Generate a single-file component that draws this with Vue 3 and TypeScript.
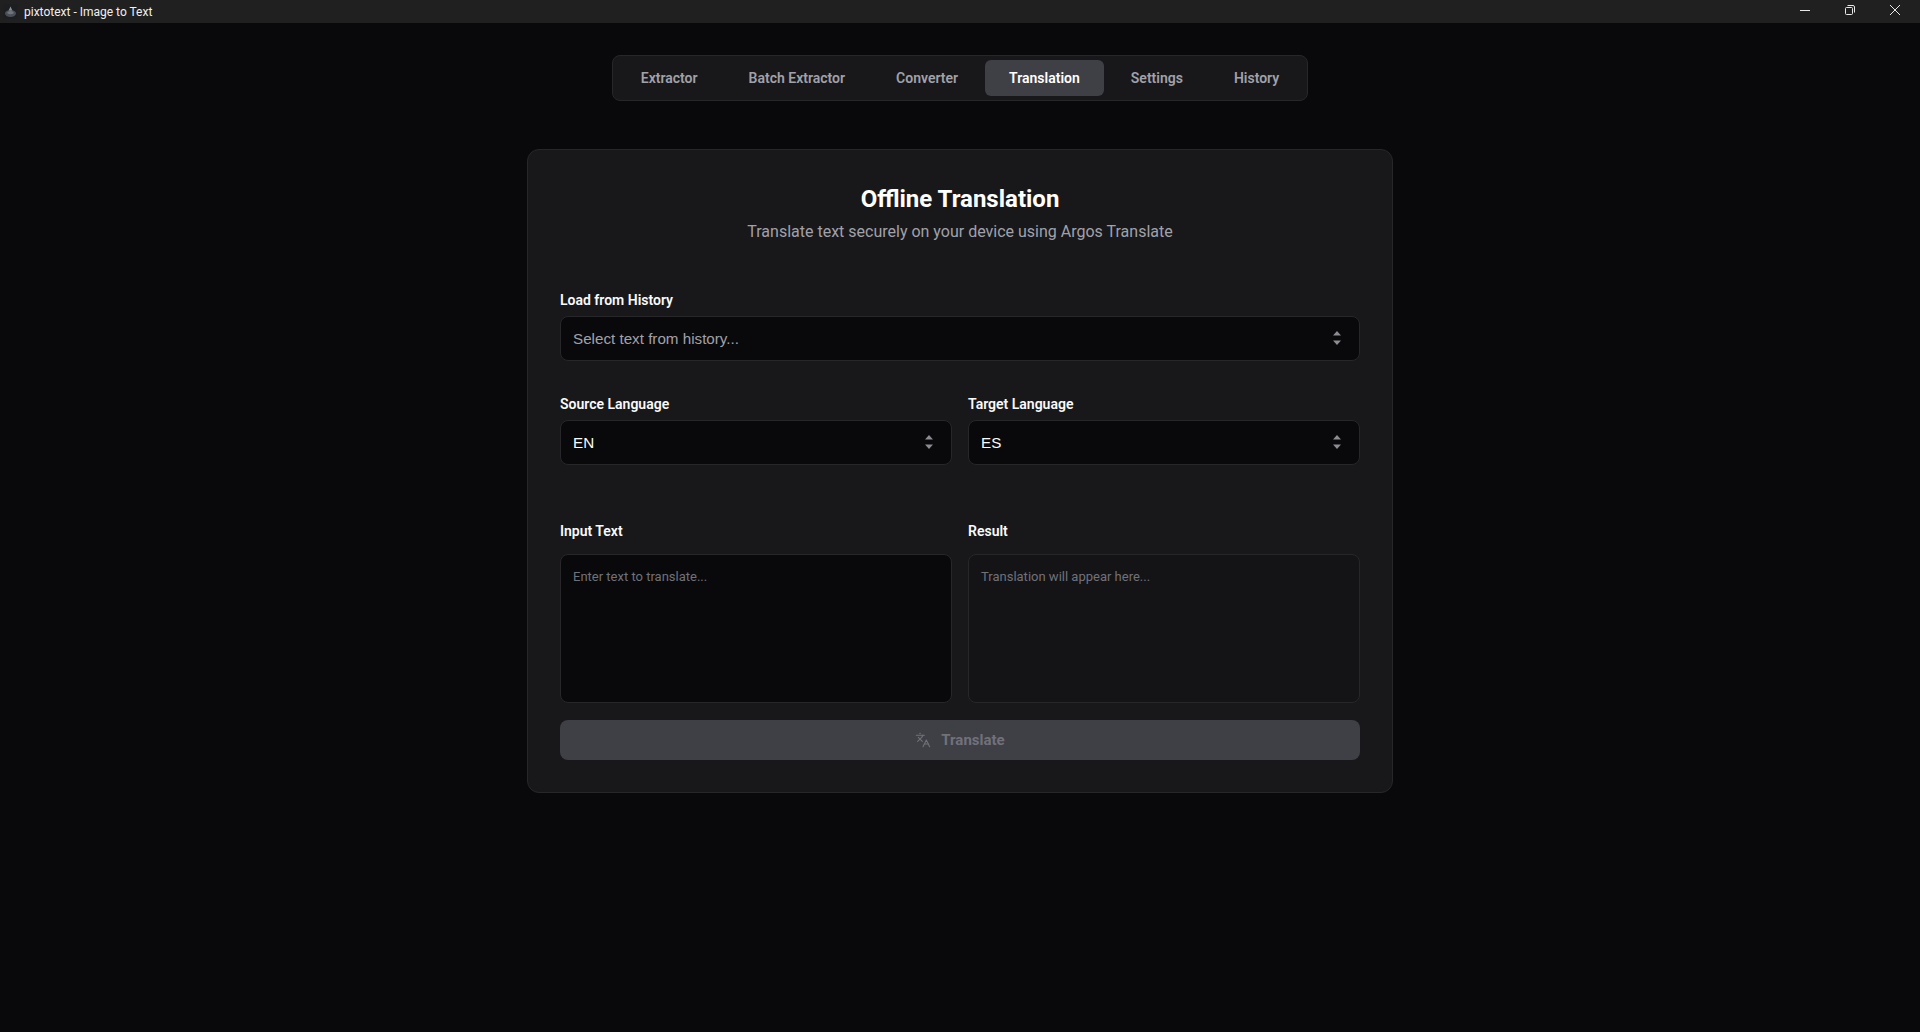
<template>
  <div class="window">
    <header class="titlebar">
      <div class="title-left">
        <svg class="app-icon" width="15" height="15" viewBox="0 0 15 15">
          <rect width="15" height="15" rx="3" fill="#1c1e22" />
          <ellipse cx="7.5" cy="9.5" rx="5.5" ry="3.4" fill="#4b4f57" />
          <ellipse cx="7.5" cy="8.6" rx="3.2" ry="1.6" fill="#70747c" />
          <path d="M7.5 2.6 9.4 6.4H5.6z" fill="#8b8f96" />
        </svg>
        <span class="app-title">pixtotext - Image to Text</span>
      </div>
      <div class="win-controls">
        <svg width="12" height="12" viewBox="0 0 12 12"><path d="M1 6.5h10" stroke="#e8e8e8" fill="none" /></svg>
        <svg width="12" height="12" viewBox="0 0 12 12"><rect x="1.5" y="3.5" width="7" height="7" rx="1" stroke="#e8e8e8" fill="none" /><path d="M3.5 1.5h5.5a1.5 1.5 0 0 1 1.5 1.5v5.5" stroke="#e8e8e8" fill="none" /></svg>
        <svg width="12" height="12" viewBox="0 0 12 12"><path d="M1 1l10 10M11 1 1 11" stroke="#e8e8e8" fill="none" /></svg>
      </div>
    </header>

    <main class="page">
      <nav class="tabs">
        <button
          v-for="tab in tabs"
          :key="tab"
          class="tab"
          :class="{ active: tab === activeTab }"
          @click="activeTab = tab"
        >
          {{ tab }}
        </button>
      </nav>

      <section class="card">
        <div class="card-head">
          <h1>Offline Translation</h1>
          <p>Translate text securely on your device using Argos Translate</p>
        </div>

        <div class="field history-field">
          <label>Load from History</label>
          <div class="select-wrap">
            <select v-model="historyItem" class="placeholder">
              <option value="">Select text from history...</option>
            </select>
            <svg class="sort-icon" width="10" height="16" viewBox="0 0 10 16"><path d="M5 1 9 5.4H1zM1 10.6h8L5 15z" fill="#8c8c92" /></svg>
          </div>
        </div>

        <div class="two-col lang-row">
          <div class="field">
            <label>Source Language</label>
            <div class="select-wrap">
              <select v-model="source">
                <option v-for="l in languages" :key="l" :value="l">{{ l }}</option>
              </select>
              <svg class="sort-icon" width="10" height="16" viewBox="0 0 10 16"><path d="M5 1 9 5.4H1zM1 10.6h8L5 15z" fill="#8c8c92" /></svg>
            </div>
          </div>
          <div class="field">
            <label>Target Language</label>
            <div class="select-wrap">
              <select v-model="target">
                <option v-for="l in languages" :key="l" :value="l">{{ l }}</option>
              </select>
              <svg class="sort-icon" width="10" height="16" viewBox="0 0 10 16"><path d="M5 1 9 5.4H1zM1 10.6h8L5 15z" fill="#8c8c92" /></svg>
            </div>
          </div>
        </div>

        <div class="two-col text-row">
          <div class="field text-field">
            <label>Input Text</label>
            <textarea v-model="inputText" placeholder="Enter text to translate..."></textarea>
          </div>
          <div class="field text-field">
            <label>Result</label>
            <textarea class="result" readonly placeholder="Translation will appear here..."></textarea>
          </div>
        </div>

        <button class="translate-btn" :disabled="!inputText">
          <svg width="16" height="16" viewBox="0 0 24 24" fill="none" stroke="currentColor" stroke-width="1.6" stroke-linecap="round" stroke-linejoin="round">
            <path d="m5 8 6 6" />
            <path d="m4 14 6-6 2-3" />
            <path d="M2 5h12" />
            <path d="M7 2h1" />
            <path d="m22 22-5-10-5 10" />
            <path d="M14 18h6" />
          </svg>
          Translate
        </button>
      </section>
    </main>
  </div>
</template>

<script setup lang="ts">
import { ref } from 'vue'

const tabs = ['Extractor', 'Batch Extractor', 'Converter', 'Translation', 'Settings', 'History']
const languages = ['EN', 'ES']

const activeTab = ref('Translation')
const historyItem = ref('')
const source = ref('EN')
const target = ref('ES')
const inputText = ref('')
</script>

<style>
html,
body {
  margin: 0;
  background: #09090b;
}
</style>

<style scoped>
.window {
  height: 1032px;
  display: flex;
  flex-direction: column;
  overflow: hidden;
  background: #09090b;
  font-family: Roboto, "Open Sans", sans-serif;
  color: #fafafa;
}

.titlebar {
  height: 23px;
  flex: none;
  display: flex;
  align-items: center;
  justify-content: space-between;
  background: #202020;
}

.title-left {
  display: flex;
  align-items: center;
  gap: 6px;
  padding-left: 3px;
}

.app-title {
  font-size: 12px;
  color: #f0f0f0;
}

.win-controls {
  display: flex;
  align-items: center;
  gap: 33px;
  padding-right: 19px;
  margin-top: -3px;
}

.win-controls svg {
  display: block;
}

.page {
  flex: 1;
  display: flex;
  flex-direction: column;
  align-items: center;
  padding-top: 32px;
}

.tabs {
  display: flex;
  gap: 3px;
  padding: 4px;
  background: #18181b;
  border: 1px solid #27272a;
  border-radius: 8px;
}

.tab {
  height: 36px;
  padding: 0 24px;
  border: none;
  border-radius: 6px;
  background: transparent;
  color: #a1a1aa;
  font-family: inherit;
  font-size: 14px;
  font-weight: 600;
}

.tab.active {
  background: #3f3f46;
  color: #fff;
}

.card {
  width: 800px;
  margin-top: 48px;
  padding: 32px;
  background: #18181b;
  border: 1px solid #27272a;
  border-radius: 12px;
}

.card-head {
  text-align: center;
}

.card-head h1 {
  margin: 0;
  font-size: 24px;
  line-height: 34px;
  font-weight: 700;
  color: #fff;
}

.card-head p {
  margin: 4px 0 0;
  font-size: 16px;
  line-height: 24px;
  color: #a1a1aa;
}

.field {
  display: flex;
  flex-direction: column;
  gap: 6px;
  min-width: 0;
}

.field label {
  font-size: 14px;
  line-height: 20px;
  font-weight: 600;
  color: #fafafa;
}

.history-field {
  margin-top: 46px;
}

.two-col {
  display: grid;
  grid-template-columns: 1fr 1fr;
  gap: 16px;
}

.lang-row {
  margin-top: 33px;
}

.text-row {
  margin-top: 56px;
}

.text-field {
  gap: 13px;
}

.select-wrap {
  position: relative;
}

.select-wrap select {
  display: block;
  width: 100%;
  height: 45px;
  box-sizing: border-box;
  padding: 0 12px;
  appearance: none;
  background: #09090b;
  border: 1px solid #27272a;
  border-radius: 8px;
  color: #fafafa;
  font-family: "Liberation Sans", Arial, sans-serif;
  font-size: 15.2px;
}

.select-wrap select.placeholder {
  color: #a1a1aa;
}

.sort-icon {
  position: absolute;
  right: 18px;
  top: 14px;
  pointer-events: none;
}

textarea {
  display: block;
  width: 100%;
  height: 149px;
  box-sizing: border-box;
  padding: 12px;
  resize: none;
  background: #09090b;
  border: 1px solid #27272a;
  border-radius: 8px;
  color: #fafafa;
  font-family: inherit;
  font-size: 13px;
  line-height: 20px;
  outline: none;
}

textarea::placeholder {
  color: #71717a;
}

textarea.result {
  background: #141417;
}

.translate-btn {
  display: flex;
  align-items: center;
  justify-content: center;
  gap: 10px;
  width: 100%;
  height: 40px;
  margin-top: 17px;
  border: none;
  border-radius: 8px;
  background: #3f3f46;
  color: #71717a;
  font-family: inherit;
  font-size: 15px;
  font-weight: 700;
}
</style>
